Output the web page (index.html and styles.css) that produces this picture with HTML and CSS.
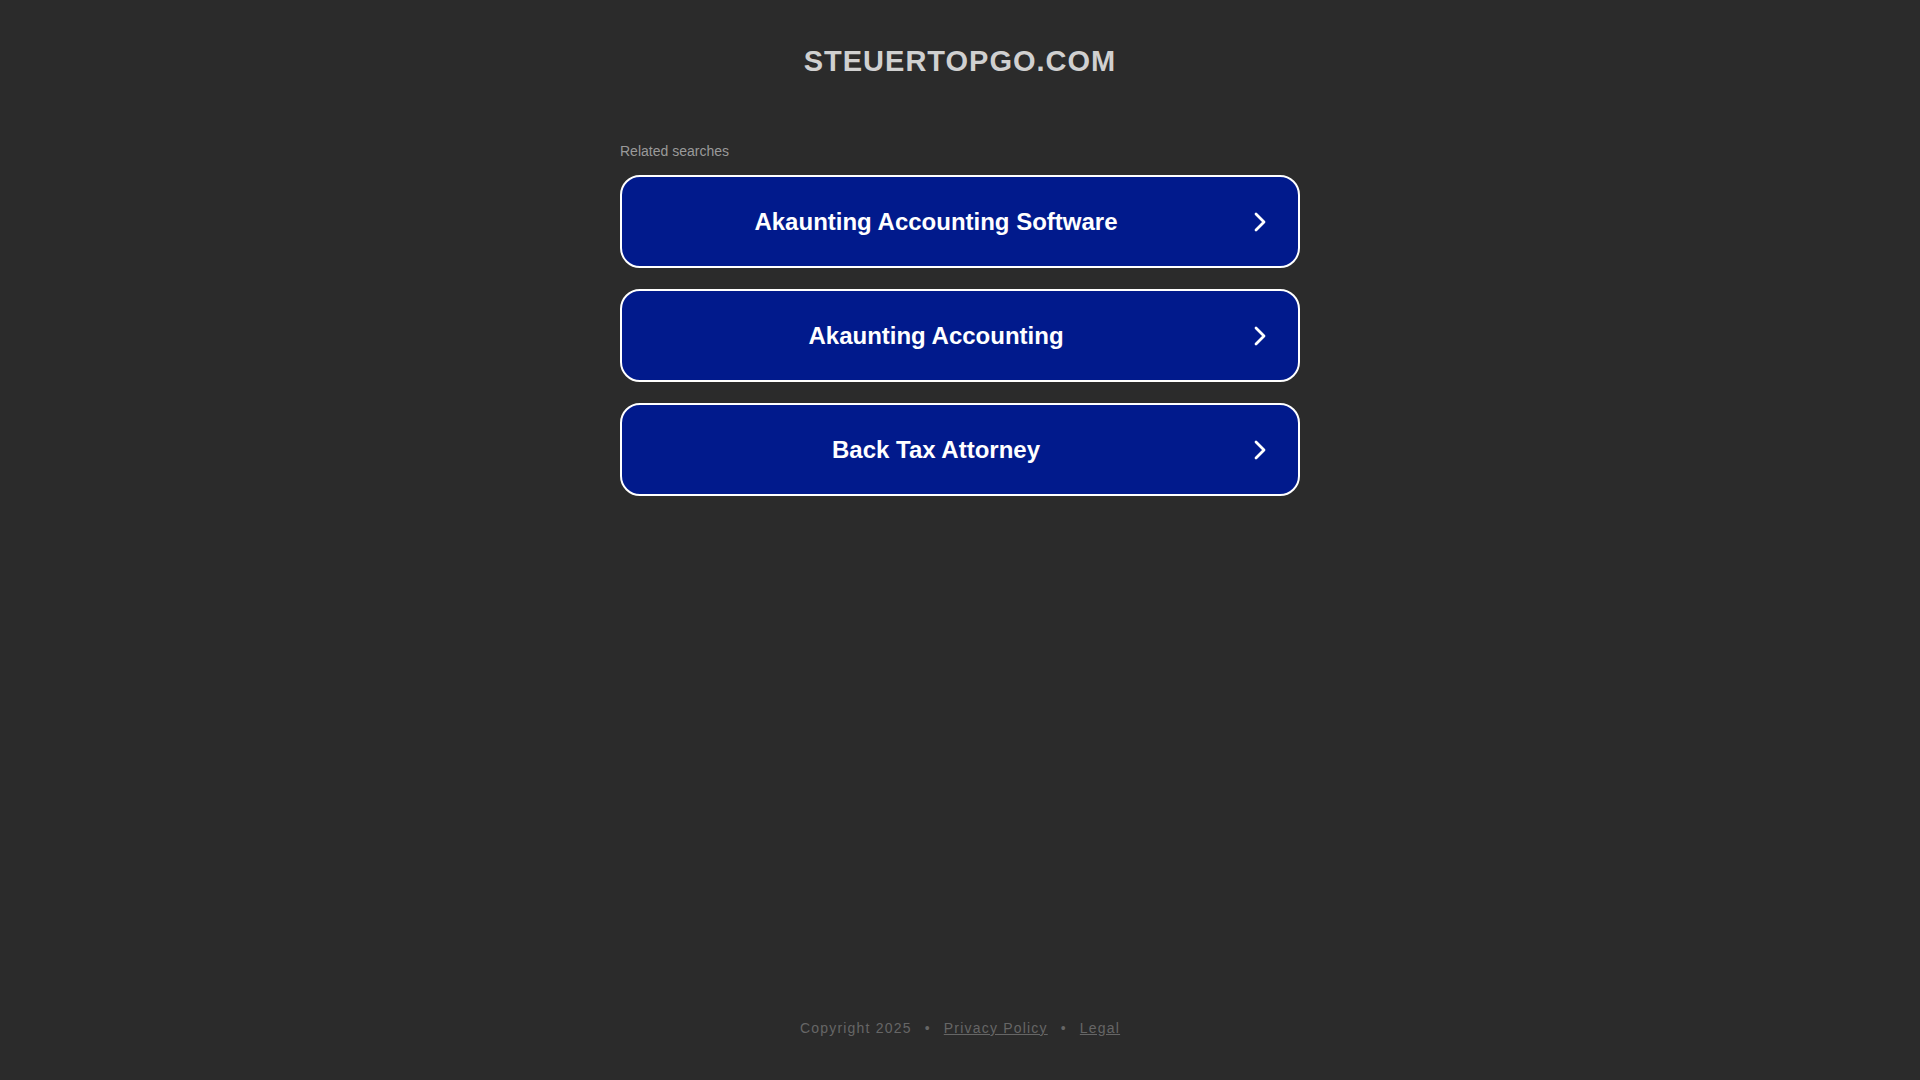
FILE: index.html
```html
<!DOCTYPE html>
<html lang="en">
<head>
<meta charset="utf-8">
<title>steuertopgo.com</title>
<link rel="stylesheet" href="styles.css">
</head>
<body>
<div class="page">
  <header class="header">
    <h1 class="domain">steuertopgo.com</h1>
  </header>
  <main class="main">
    <div class="related-label">Related searches</div>
    <div class="links">
      <a class="link-box" href="#"><span class="link-text">Akaunting Accounting Software</span><svg class="chev" viewBox="0 0 24 24" width="24" height="24"><path d="M8 4 L16 12 L8 20" fill="none" stroke="#fff" stroke-width="2.8" stroke-linecap="round" stroke-linejoin="round"/></svg></a>
      <a class="link-box" href="#"><span class="link-text">Akaunting Accounting</span><svg class="chev" viewBox="0 0 24 24" width="24" height="24"><path d="M8 4 L16 12 L8 20" fill="none" stroke="#fff" stroke-width="2.8" stroke-linecap="round" stroke-linejoin="round"/></svg></a>
      <a class="link-box" href="#"><span class="link-text">Back Tax Attorney</span><svg class="chev" viewBox="0 0 24 24" width="24" height="24"><path d="M8 4 L16 12 L8 20" fill="none" stroke="#fff" stroke-width="2.8" stroke-linecap="round" stroke-linejoin="round"/></svg></a>
    </div>
  </main>
  <footer class="footer">
    <span>Copyright 2025</span>
    <span class="dot">•</span>
    <a href="#" class="foot-link">Privacy Policy</a>
    <span class="dot">•</span>
    <a href="#" class="foot-link">Legal</a>
  </footer>
</div>
</body>
</html>
```
FILE: styles.css
```css
html, body {
  margin: 0;
  padding: 0;
  background: #2b2b2b;
  font-family: "Liberation Sans", Arial, sans-serif;
}
.page {
  min-height: 100vh;
  display: flex;
  flex-direction: column;
  align-items: center;
}
.header {
  padding-top: 44px;
}
.domain {
  margin: 0;
  font-size: 29px;
  line-height: 34px;
  font-weight: bold;
  text-transform: uppercase;
  letter-spacing: 1px;
  color: #d0d0d0;
}
.main {
  width: 680px;
  margin-top: 65px;
  flex: 1;
}
.related-label {
  font-size: 14px;
  line-height: 16px;
  color: #9a9a9a;
  margin-bottom: 16px;
}
.links {
  display: flex;
  flex-direction: column;
  gap: 21px;
}
.link-box {
  position: relative;
  display: flex;
  align-items: center;
  justify-content: center;
  height: 89px;
  border: 2px solid #ffffff;
  border-radius: 20px;
  background: #011a8c;
  color: #ffffff;
  text-decoration: none;
}
.link-text {
  font-size: 24px;
  font-weight: bold;
  margin-right: 48px;
}
.chev {
  position: absolute;
  right: 26px;
  top: 50%;
  margin-top: -12px;
}
.footer {
  padding-bottom: 43px;
  font-size: 14px;
  line-height: 18px;
  letter-spacing: 1.2px;
  color: #666666;
  display: flex;
  gap: 12px;
}
.dot {
  padding: 0 1px;
}
.foot-link {
  color: #666666;
  text-decoration: underline;
}
```
